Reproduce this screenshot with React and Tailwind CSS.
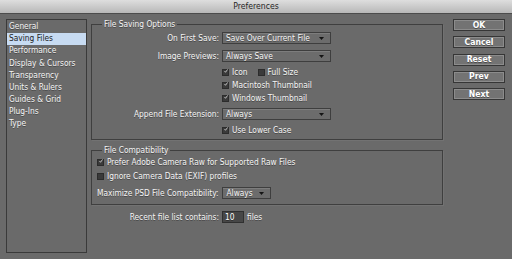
import React from 'react';

const categories = [
  'General',
  'Saving Files',
  'Performance',
  'Display & Cursors',
  'Transparency',
  'Units & Rulers',
  'Guides & Grid',
  'Plug-Ins',
  'Type',
];

const buttons = ['OK', 'Cancel', 'Reset', 'Prev', 'Next'];

const Select = ({ value, width }) => (
  <div
    className={`${width} h-[12px] flex items-center justify-between pl-[3px] pr-[6px] border border-[#3e3e3e] bg-[#6c6c6c] shadow-[inset_0_1px_0_rgba(255,255,255,0.12)]`}
  >
    <span>{value}</span>
    <svg width="5" height="3" viewBox="0 0 5 3">
      <path d="M0 0 L5 0 L2.5 3 Z" fill="#141414" />
    </svg>
  </div>
);

const Checkbox = ({ checked, label }) => (
  <div className="flex items-center gap-[3px]">
    <div className="w-[7px] h-[7px] bg-[#3a3a3a] border border-[#2c2c2c] flex items-center justify-center">
      {checked && (
        <svg width="8" height="8" viewBox="0 0 8 8" className="-mt-[2px] ml-[1px]">
          <path d="M1 4.2 L3 6.6 L7.2 0.8" fill="none" stroke="#ffffff" strokeWidth="1.3" />
        </svg>
      )}
    </div>
    <span>{label}</span>
  </div>
);

const Row = ({ label, children, className = '' }) => (
  <div className={`flex items-center h-[12px] ${className}`}>
    <div className="w-[130px] pr-[3px] text-right">{label}</div>
    {children}
  </div>
);

export default function App() {
  return (
    <div className="w-[512px] h-[259px] overflow-hidden bg-[#6a6a6a] text-[#f5f5f5] text-[8.3px] leading-[11px] font-['DejaVu_Sans_Condensed','Liberation_Sans',sans-serif] [text-shadow:0_1px_0_rgba(0,0,0,0.35)] flex flex-col">
      <div className="h-[14px] shrink-0 flex items-center justify-center border-b border-[#4c4c4c] bg-gradient-to-b from-[#dedede] to-[#b8b8b8] text-[#262626] text-[8.6px] [text-shadow:none]">
        Preferences
      </div>

      <div className="flex">
        <div className="ml-[6px] mt-[5px] w-[81px] h-[234px] border border-[#3a3a3a] pt-[0.5px]">
          {categories.map((c) => (
            <div
              key={c}
              className={`h-[12.16px] flex items-center pl-[2px] ${
                c === 'Saving Files'
                  ? 'bg-[#c7dbf2] text-[#1d1d1d] [text-shadow:none]'
                  : ''
              }`}
            >
              {c}
            </div>
          ))}
        </div>

        <div className="ml-[4px] w-[352px] flex flex-col">
          <fieldset className="mt-[5px] border border-[#3f3f3f] pb-[3px] shadow-[1px_1px_0_rgba(255,255,255,0.06)]">
            <legend className="ml-[10px] px-[2px]">File Saving Options</legend>
            <Row label="On First Save:" className="mt-[2px]">
              <Select value="Save Over Current File" width="w-[109px]" />
            </Row>
            <Row label="Image Previews:" className="mt-[6px]">
              <Select value="Always Save" width="w-[109px]" />
            </Row>
            <Row label="" className="mt-[4px]">
              <div className="flex items-center gap-[10px]">
                <Checkbox checked label="Icon" />
                <Checkbox label="Full Size" />
              </div>
            </Row>
            <Row label="" className="mt-[1px]">
              <Checkbox checked label="Macintosh Thumbnail" />
            </Row>
            <Row label="" className="mt-[1px]">
              <Checkbox checked label="Windows Thumbnail" />
            </Row>
            <Row label="Append File Extension:" className="mt-[4px]">
              <Select value="Always" width="w-[109px]" />
            </Row>
            <Row label="" className="mt-[4px]">
              <Checkbox checked label="Use Lower Case" />
            </Row>
          </fieldset>

          <fieldset className="mt-[5px] border border-[#3f3f3f] pl-[5px] pb-[5px] shadow-[1px_1px_0_rgba(255,255,255,0.06)]">
            <legend className="ml-[5px] px-[2px]">File Compatibility</legend>
            <div className="h-[12px] flex items-center">
              <Checkbox checked label="Prefer Adobe Camera Raw for Supported Raw Files" />
            </div>
            <div className="h-[12px] mt-[2px] flex items-center">
              <Checkbox label="Ignore Camera Data (EXIF) profiles" />
            </div>
            <div className="h-[12px] mt-[5px] flex items-center gap-[4px]">
              <span>Maximize PSD File Compatibility:</span>
              <Select value="Always" width="w-[49px]" />
            </div>
          </fieldset>

          <div className="mt-[6px] h-[12px] flex items-center">
            <div className="w-[131px] pr-[3px] text-right">Recent file list contains:</div>
            <div className="w-[22px] h-[12px] border border-[#303030] bg-[#474747] pl-[2px] flex items-center text-white">
              10
            </div>
            <span className="ml-[3px]">files</span>
          </div>
        </div>

        <div className="ml-[10px] mt-[5px] w-[52px] flex flex-col gap-[5.25px]">
          {buttons.map((b) => (
            <div
              key={b}
              className="h-[12px] border border-[#363636] bg-[#737373] shadow-[inset_0_0_0_1px_rgba(255,255,255,0.18)] flex items-center justify-center font-bold text-[8.6px] text-white"
            >
              {b}
            </div>
          ))}
        </div>
      </div>
    </div>
  );
}
